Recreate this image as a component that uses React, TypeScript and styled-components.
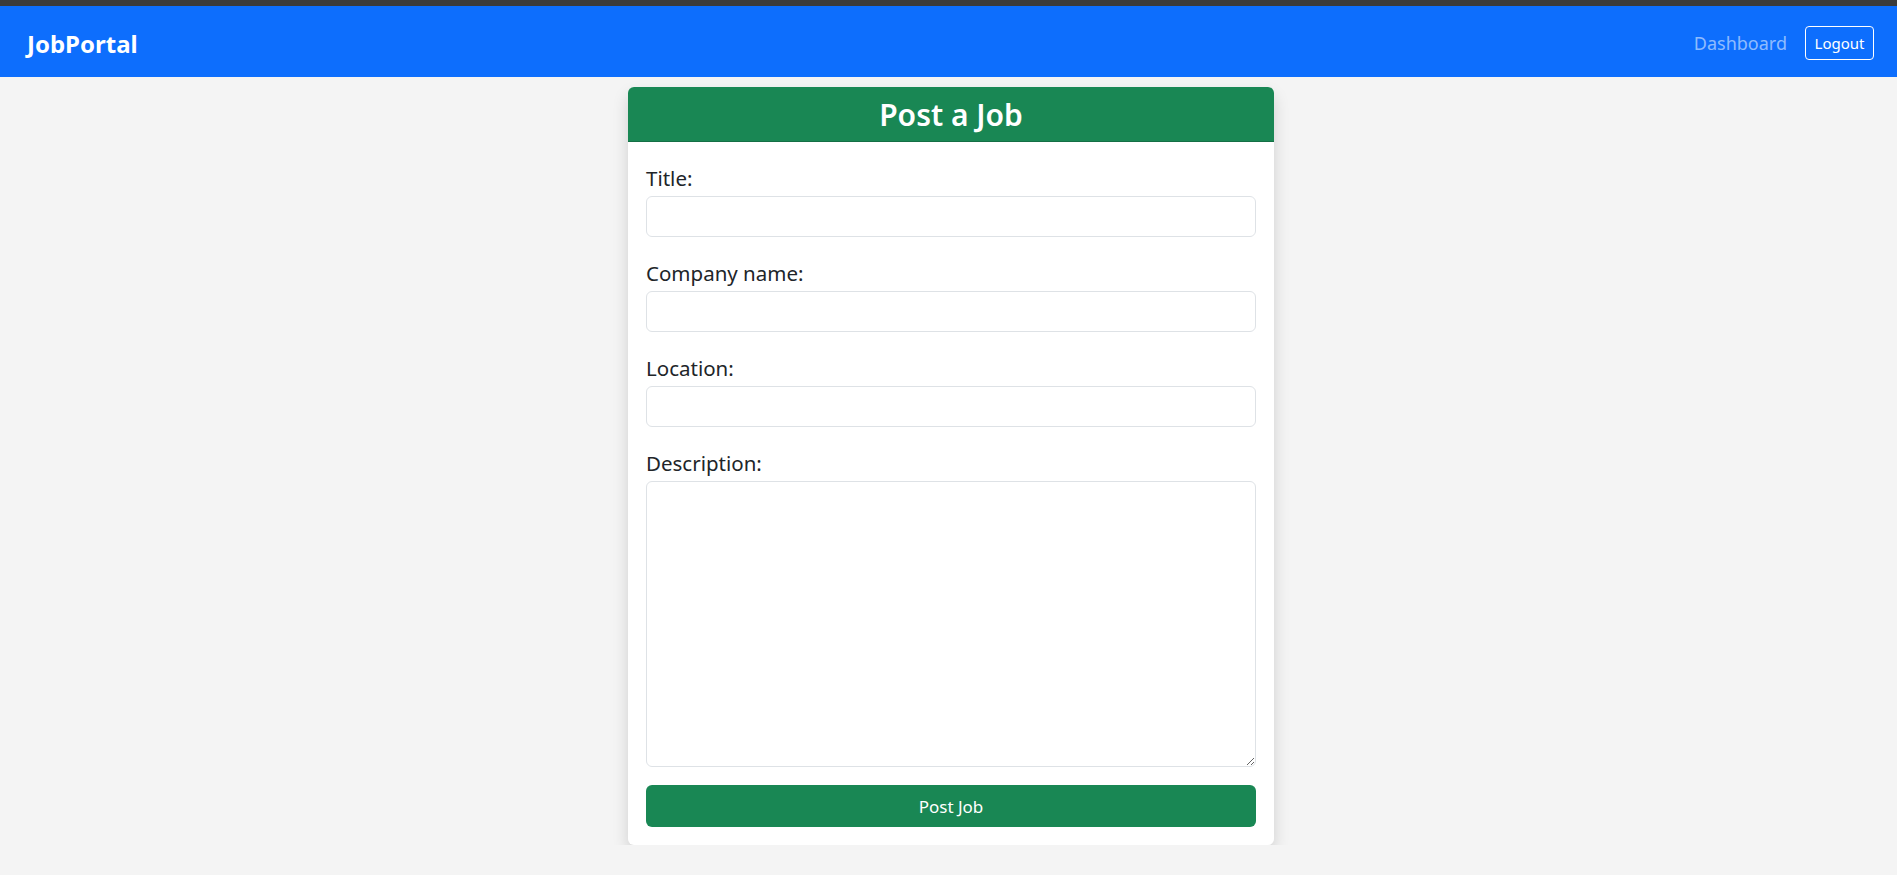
import React from 'react';
import styled, { createGlobalStyle } from 'styled-components';

const GlobalStyle = createGlobalStyle`
  body {
    margin: 0;
    background-color: #f4f4f4;
    font-family: "Noto Sans", "Open Sans", sans-serif;
    color: #212529;
  }
  * {
    box-sizing: border-box;
  }
`;

const TopStrip = styled.div`
  height: 6px;
  background-color: #3b3b3b;
`;

const Navbar = styled.nav`
  height: 71px;
  background-color: #0d6efd;
  display: flex;
  align-items: center;
  justify-content: space-between;
  padding: 0 23px 0 27px;
`;

const Brand = styled.a`
  color: #fff;
  font-size: 24px;
  font-weight: 700;
  text-decoration: none;
  margin-top: 4px;
`;

const NavRight = styled.div`
  display: flex;
  align-items: center;
  gap: 18px;
  margin-top: 2px;
`;

const NavLink = styled.a`
  color: rgba(255, 255, 255, 0.55);
  font-size: 18px;
  text-decoration: none;
`;

const LogoutButton = styled.button`
  height: 34px;
  width: 69px;
  padding: 0;
  background: transparent;
  border: 1px solid #fff;
  border-radius: 4px;
  color: #fff;
  font-family: inherit;
  font-size: 15px;
`;

const Main = styled.main`
  padding: 10px 0 0 5px;
`;

const Card = styled.div`
  width: 646px;
  margin: 0 auto;
  background-color: #fff;
  border-radius: 6px;
  overflow: hidden;
  box-shadow: 0 8px 16px rgba(0, 0, 0, 0.15);
`;

const CardHeader = styled.h2`
  margin: 0;
  height: 55px;
  display: flex;
  align-items: center;
  justify-content: center;
  background-color: #198754;
  border-bottom: 1px solid rgba(0, 0, 0, 0.175);
  color: #fff;
  font-size: 30px;
  font-weight: 600;
`;

const Form = styled.form`
  padding: 21px 18px 18px;
`;

const Field = styled.div<{ $gap?: number }>`
  margin-bottom: ${(p) => p.$gap ?? 21}px;
`;

const Label = styled.label`
  display: block;
  font-size: 20.5px;
  line-height: 30px;
  margin-bottom: 3px;
  color: #212529;
`;

const Input = styled.input`
  display: block;
  width: 100%;
  height: 41px;
  border: 1px solid #dee2e6;
  border-radius: 6px;
  padding: 6px 12px;
  font-family: inherit;
  font-size: 17px;
  outline: none;
`;

const TextArea = styled.textarea`
  display: block;
  width: 100%;
  height: 286px;
  border: 1px solid #dee2e6;
  border-radius: 6px;
  padding: 6px 12px;
  font-family: inherit;
  font-size: 17px;
  resize: vertical;
  outline: none;
`;

const SubmitButton = styled.button`
  display: block;
  width: 100%;
  height: 42px;
  border: none;
  border-radius: 6px;
  background-color: #198754;
  color: #fff;
  font-family: inherit;
  font-size: 17px;
`;

const fields = [
  { id: 'title', label: 'Title:' },
  { id: 'company', label: 'Company name:' },
  { id: 'location', label: 'Location:' },
];

export default function App() {
  return (
    <>
      <GlobalStyle />
      <TopStrip />
      <Navbar>
        <Brand href="#">JobPortal</Brand>
        <NavRight>
          <NavLink href="#">Dashboard</NavLink>
          <LogoutButton>Logout</LogoutButton>
        </NavRight>
      </Navbar>
      <Main>
        <Card>
          <CardHeader>Post a Job</CardHeader>
          <Form onSubmit={(e) => e.preventDefault()}>
            {fields.map((f) => (
              <Field key={f.id}>
                <Label htmlFor={f.id}>{f.label}</Label>
                <Input id={f.id} type="text" />
              </Field>
            ))}
            <Field $gap={18}>
              <Label htmlFor="description">Description:</Label>
              <TextArea id="description" />
            </Field>
            <SubmitButton type="submit">Post Job</SubmitButton>
          </Form>
        </Card>
      </Main>
    </>
  );
}
